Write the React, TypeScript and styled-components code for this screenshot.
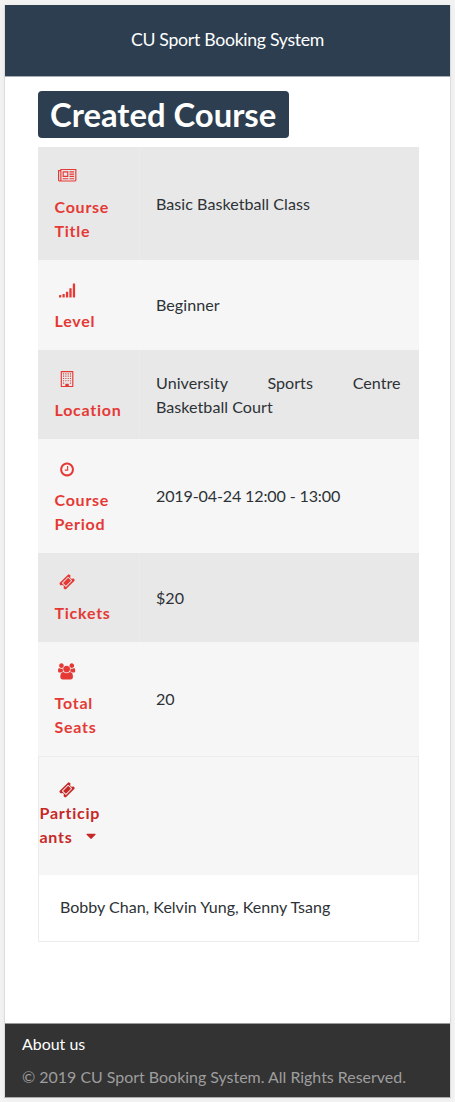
import React from "react";
import styled, { createGlobalStyle } from "styled-components";

const GlobalStyle = createGlobalStyle`
  *, *::before, *::after { box-sizing: border-box; }
  body {
    margin: 0;
    background: #f3f3f3;
    font-family: Lato, "Liberation Sans", sans-serif;
    font-size: 16px;
    line-height: 24.15px;
    color: #2d3236;
  }
`;

const Page = styled.div`
  display: flex;
  flex-direction: column;
  width: 447px;
  height: 1093px;
  margin: 5px 0 4px 4px;
  background: #fff;
  border: 1px solid #dcdcdc;
  border-top: 0;
  border-bottom-color: #aaa;
  box-shadow: 0 0 6px rgba(0, 0, 0, 0.04);
`;

const Header = styled.header`
  display: flex;
  align-items: center;
  justify-content: center;
  height: 72px;
  flex: none;
  border-bottom: 1px solid #a5adb7;
  background: #2c3e50;
  color: #fff;
  font-size: 17.7px;
  letter-spacing: -0.3px;
`;

const Main = styled.main`
  flex: 1;
  padding: 14px 32px 0 33px;
`;

const Title = styled.h1`
  display: flex;
  align-items: center;
  width: 251px;
  height: 47px;
  margin: 0 0 8.8px;
  padding: 1px 0 0 12px;
  border-radius: 4px;
  background: #2c3e50;
  color: #fff;
  font-size: 32.8px;
  font-weight: 700;
  white-space: nowrap;
`;

const Details = styled.dl`
  margin: 0;
  width: 380.6px;
`;

const Row = styled.div<{ $shaded?: boolean; $lines: number }>`
  display: flex;
  height: ${(p) => 65.26 + p.$lines * 24.15}px;
  background: ${(p) => (p.$shaded ? "#e8e8e8" : "#f6f6f6")};
`;

const Label = styled.dt`
  display: flex;
  flex-direction: column;
  flex: none;
  width: 102px;
  padding: 16.3px 12px 0 16.5px;
  border-right: 1px solid rgba(255, 255, 255, 0.15);
  color: #e53935;
  font-weight: 700;
  letter-spacing: 0.75px;
`;

const IconSlot = styled.span`
  display: flex;
  align-items: center;
  justify-content: center;
  width: 20.6px;
  height: 24.2px;
  margin: 0 0 8px 2.2px;
`;

const Value = styled.dd<{ $tight?: boolean }>`
  flex: 1;
  align-self: center;
  margin: 0;
  padding: 0.8px 18px 0 16px;
  font-size: 16.1px;
  letter-spacing: ${(p) => (p.$tight ? "-0.15px" : "0.03px")};
  text-align: justify;
`;

const Panel = styled.section`
  width: 380.6px;
  border: 1px solid #ececec;
`;

const PanelToggle = styled.div`
  height: 118px;
  padding-top: 20.4px;
  background: #f6f6f6;
  color: #c62828;
  font-weight: 700;
  letter-spacing: 0.75px;

  ${IconSlot} {
    margin: 0 0 0 18px;
  }
`;

const ToggleText = styled.div`
  display: flex;
  align-items: center;
  padding-left: 0.5px;
`;

const Caret = styled.span`
  display: flex;
  margin: 0 0 3px 10.5px;
`;

const PanelBody = styled.div`
  height: 66px;
  padding: 20.4px 21px;
  font-size: 16.05px;
`;

const Footer = styled.footer`
  flex: none;
  height: 74px;
  padding: 8px 17px 0;
  border-top: 1px solid #999;
  background: #333;
  color: #9e9e9e;
  font-size: 15.95px;
`;

const FooterLink = styled.div`
  margin-bottom: 8.5px;
  color: #fff;
`;

const windowCells = [256, 512, 768, 1024, 1280].flatMap((y) =>
  [448, 704, 960, 1216]
    .filter((x) => y < 1280 || x === 448 || x === 1216)
    .map((x) => ({ x, y }))
);

const paths = {
  newspaper:
    "M1024 512h-384v384h384v-384zm128 640v128h-640v-128h640zm0-768v640h-640v-640h640zm640 768v128h-512v-128h512zm0-256v128h-512v-128h512zm0-256v128h-512v-128h512zm0-256v128h-512v-128h512zm-1536 960v-960h-128v960q0 26 19 45t45 19 45-19 19-45zm1664 0v-1088h-1536v1088q0 33-11 64h1483q26 0 45-19t19-45zm128-1216v1216q0 80-56 136t-136 56h-1664q-80 0-136-56t-56-136v-1088h256v-128h1792z",
  clock:
    "M1024 544v448q0 14-9 23t-23 9h-320q-14 0-23-9t-9-23v-64q0-14 9-23t23-9h224v-352q0-14 9-23t23-9h64q14 0 23 9t9 23zm416 352q0-148-73-273t-198-198-273-73-273 73-198 198-73 273 73 273 198 198 273 73 273-73 198-198 73-273zm224 0q0 209-103 385.5t-279.5 279.5-385.5 103-385.5-103-279.5-279.5-103-385.5 103-385.5 279.5-279.5 385.5-103 385.5 103 279.5 279.5 103 385.5z",
  ticket:
    "M1024 452l316 316-572 572-316-316zm-211 979l618-618q19-19 19-45t-19-45l-362-362q-18-18-45-18t-45 18l-618 618q-19 19-19 45t19 45l362 362q18 18 45 18t45-18zm889-637l-907 908q-37 37-90.5 37t-90.5-37l-126-126q56-56 56-136t-56-136-136-56-136 56l-125-126q-37-37-37-90.5t37-90.5l907-906q37-37 90.5-37t90.5 37l125 125q-56 56-56 136t56 136 136 56 136-56l126 125q37 37 37 90.5t-37 90.5z",
  group:
    "M593 896q-162 5-265 128h-134q-82 0-138-40.5t-56-118.5q0-353 124-353 6 0 43.5 21t97.5 42.5 119 21.5q67 0 133-23-5 37-5 66 0 139 81 256zm1071 637q0 120-73 189.5t-194 69.5h-874q-121 0-194-69.5t-73-189.5q0-53 3.5-103.5t14-109 26.5-108.5 43-97.5 62-81 85.5-53.5 111.5-20q10 0 43 21.5t73 48 107 48 135 21.5 135-21.5 107-48 73-48 43-21.5q61 0 111.5 20t85.5 53.5 62 81 43 97.5 26.5 108.5 14 109 3.5 103.5zm-1024-1277q0 106-75 181t-181 75-181-75-75-181 75-181 181-75 181 75 75 181zm704 384q0 159-112.5 271.5t-271.5 112.5-271.5-112.5-112.5-271.5 112.5-271.5 271.5-112.5 271.5 112.5 112.5 271.5zm576 225q0 78-56 118.5t-138 40.5h-134q-103-123-265-128 81-117 81-256 0-29-5-66 66 23 133 23 59 0 119-21.5t97.5-42.5 43.5-21q124 0 124 353zm-128-609q0 106-75 181t-181 75-181-75-75-181 75-181 181-75 181 75 75 181z",
  caret:
    "M1408 704q0 26-19 45l-448 448q-19 19-45 19t-45-19l-448-448q-19-19-19-45t19-45 45-19h896q26 0 45 19t19 45z",
};

function Glyph({
  width = 1792,
  drop = 0,
  children,
}: {
  width?: number;
  drop?: number;
  children: React.ReactNode;
}) {
  return (
    <svg
      width={(width / 1792) * 16.1}
      height={16.1}
      viewBox={`0 ${-drop} ${width} 1792`}
      fill="currentColor"
      overflow="visible"
      aria-hidden="true"
    >
      {children}
    </svg>
  );
}

const icons = {
  newspaper: (
    <Glyph width={2048} drop={90}>
      <path d={paths.newspaper} />
    </Glyph>
  ),
  signal: (
    <Glyph drop={290}>
      {[1280, 1152, 896, 512, 0].map((y, i) => (
        <rect key={y} x={i * 384} y={y} width={256} height={1536 - y} rx={32} />
      ))}
    </Glyph>
  ),
  building: (
    <Glyph drop={110}>
      <path
        fillRule="evenodd"
        d="M256 0h1280q26 0 45 19t19 45v1664q0 26-19 45t-45 19h-1280q-26 0-45-19t-19-45v-1664q0-26 19-45t45-19zm64 128v1536h384v-224q0-13 9.500-22.500t22.500-9.500h320q13 0 22.500 9.500t9.500 22.500v224h384v-1536z"
      />
      {windowCells.map(({ x, y }) => (
        <rect key={`${x}-${y}`} x={x} y={y} width={128} height={128} rx={32} />
      ))}
    </Glyph>
  ),
  clock: (
    <Glyph drop={160}>
      <path d={paths.clock} />
    </Glyph>
  ),
  ticket: (
    <Glyph drop={90}>
      <path d={paths.ticket} />
    </Glyph>
  ),
  group: (
    <Glyph width={1920} drop={150}>
      <path d={paths.group} />
    </Glyph>
  ),
  caret: (
    <Glyph>
      <path d={paths.caret} />
    </Glyph>
  ),
};

const rows: { icon: keyof typeof icons; label: string[]; value: string; tight?: boolean }[] = [
  { icon: "newspaper", label: ["Course", "Title"], value: "Basic Basketball Class" },
  { icon: "signal", label: ["Level"], value: "Beginner" },
  { icon: "building", label: ["Location"], value: "University Sports Centre Basketball Court" },
  { icon: "clock", label: ["Course", "Period"], value: "2019-04-24 12:00 - 13:00", tight: true },
  { icon: "ticket", label: ["Tickets"], value: "$20" },
  { icon: "group", label: ["Total", "Seats"], value: "20" },
];

export default function App() {
  return (
    <>
      <GlobalStyle />
      <Page>
        <Header>CU Sport Booking System</Header>
        <Main>
          <Title>Created Course</Title>
          <Details>
            {rows.map((row, i) => (
              <Row key={i} $shaded={i % 2 === 0} $lines={row.label.length}>
                <Label>
                  <IconSlot>{icons[row.icon]}</IconSlot>
                  {row.label.map((line) => (
                    <span key={line}>{line}</span>
                  ))}
                </Label>
                <Value $tight={row.tight}>{row.value}</Value>
              </Row>
            ))}
          </Details>
          <Panel>
            <PanelToggle>
              <IconSlot>{icons.ticket}</IconSlot>
              <ToggleText>Particip</ToggleText>
              <ToggleText>
                ants
                <Caret>{icons.caret}</Caret>
              </ToggleText>
            </PanelToggle>
            <PanelBody>Bobby Chan, Kelvin Yung, Kenny Tsang</PanelBody>
          </Panel>
        </Main>
        <Footer>
          <FooterLink>About us</FooterLink>
          <div>© 2019 CU Sport Booking System. All Rights Reserved.</div>
        </Footer>
      </Page>
    </>
  );
}
